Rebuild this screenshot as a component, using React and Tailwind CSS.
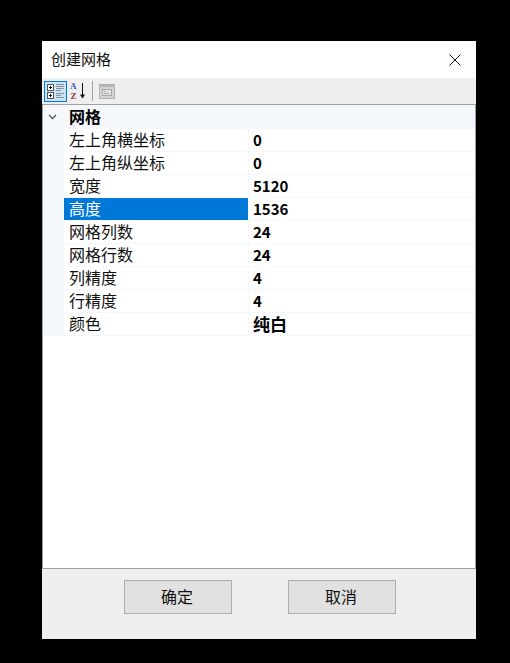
import React from "react";

const FONT = "font-['Noto_Sans_CJK_SC','Liberation_Sans',sans-serif]";

const rows = [
  { name: "左上角横坐标", value: "0" },
  { name: "左上角纵坐标", value: "0" },
  { name: "宽度", value: "5120" },
  { name: "高度", value: "1536", selected: true },
  { name: "网格列数", value: "24" },
  { name: "网格行数", value: "24" },
  { name: "列精度", value: "4" },
  { name: "行精度", value: "4" },
  { name: "颜色", value: "纯白", cjk: true },
];

function CategorizedIcon() {
  return (
    <svg width="17" height="16" viewBox="0 0 17 16" shapeRendering="crispEdges">
      <rect x="0.5" y="1.5" width="6" height="6" fill="#fff" stroke="#555" />
      <path d="M2 4.5h3M3.5 3v3" stroke="#111" />
      <rect x="0.5" y="9.5" width="6" height="6" fill="#fff" stroke="#555" />
      <path d="M2 12.5h3M3.5 11v3" stroke="#111" />
      <path d="M9 1.5h8M9 3.5h8M9 5.5h8M9 7.5h5M9 10.5h8M9 12.5h5M9 14.5h8" stroke="#8a9199" />
    </svg>
  );
}

function SortIcon() {
  return (
    <svg width="18" height="20" viewBox="0 0 18 20">
      <text x="1" y="8.1" fontSize="9" fontWeight="700" fill="#2f5fb5" fontFamily="Liberation Serif">A</text>
      <text x="1.5" y="18.1" fontSize="9" fontWeight="700" fill="#8a3a3a" fontFamily="Liberation Serif">Z</text>
      <path d="M13.5 2v13" stroke="#111" strokeWidth="1" />
      <path d="M11 13.5h5L13.5 17.5z" fill="#111" />
    </svg>
  );
}

function PagesIcon() {
  return (
    <svg width="16" height="15" viewBox="0 0 16 15" shapeRendering="crispEdges">
      <rect x="0.5" y="0.5" width="15" height="14" fill="#d4d4d4" stroke="#b0b0b0" />
      <rect x="1" y="1" width="14" height="2" fill="#b8b8b8" />
      <rect x="3.5" y="5.5" width="9" height="6" fill="#e4e4e4" stroke="#a8a8a8" />
      <path d="M5 7.5h2M5 9.5h5" stroke="#a8a8a8" />
    </svg>
  );
}

function PropertyRow({ name, value, selected, cjk }) {
  return (
    <div className="flex h-[23px] border-b border-[#f4f7fc]">
      <div className={`w-[184px] pl-[5px] text-[16px] leading-[21px] ${selected ? "bg-[#0078d7] text-white" : "text-[#111]"}`}>
        {name}
      </div>
      <div className={`flex-1 border-l border-[#f4f7fc] pl-[4px] font-bold leading-[21px] text-black ${cjk ? "text-[17px]" : "text-[15px]"}`}>
        {value}
      </div>
    </div>
  );
}

export default function App() {
  return (
    <div className={`h-[663px] w-[510px] bg-black pl-[42px] pt-[41px] ${FONT}`}>
      <div className="flex h-[598px] w-[434px] flex-col bg-[#efefef]">
        {/* title bar */}
        <div className="flex h-[37px] items-center justify-between bg-white pl-[9px] pr-[15px]">
          <span className="text-[15px] text-[#111]">创建网格</span>
          <svg width="12" height="12" viewBox="0 0 12 12">
            <path d="M0.5 0.5l11 11M11.5 0.5l-11 11" stroke="#111" strokeWidth="1" />
          </svg>
        </div>

        {/* toolbar */}
        <div className="flex h-[26px] items-center pl-[2px]">
          <div className="flex h-[21px] w-[23px] items-center justify-center border border-[#0078d7] bg-[#cce4f7]">
            <CategorizedIcon />
          </div>
          <div className="ml-[2px] flex items-center">
            <SortIcon />
          </div>
          <div className="ml-[5px] h-[20px] w-px bg-[#a0a0a0]" />
          <div className="ml-[6px] flex items-center">
            <PagesIcon />
          </div>
        </div>

        {/* property grid */}
        <div className="h-[465px] border border-[#a0a0a0] bg-white">
          <div className="flex h-[24px] items-center bg-[#f4f7fc]">
            <svg className="ml-[5px]" width="9" height="6" viewBox="0 0 9 6">
              <path d="M1 1l3.5 3.5L8 1" fill="none" stroke="#555" strokeWidth="1.3" />
            </svg>
            <span className="ml-[12px] pb-[2px] text-[16px] font-bold leading-[22px] text-black">网格</span>
          </div>
          <div className="border-l-[21px] border-[#f4f7fc]">
            {rows.map((row) => (
              <PropertyRow key={row.name} {...row} />
            ))}
          </div>
        </div>

        {/* buttons */}
        <div className="flex flex-1 justify-center gap-[56px] pl-[2px] pt-[11px]">
          <button className="h-[34px] w-[108px] border border-[#adadad] bg-[#e1e1e1] pb-[2px] pr-[2px] text-[16px] text-[#111]">确定</button>
          <button className="h-[34px] w-[108px] border border-[#adadad] bg-[#e1e1e1] pb-[2px] pr-[2px] text-[16px] text-[#111]">取消</button>
        </div>
      </div>
    </div>
  );
}
